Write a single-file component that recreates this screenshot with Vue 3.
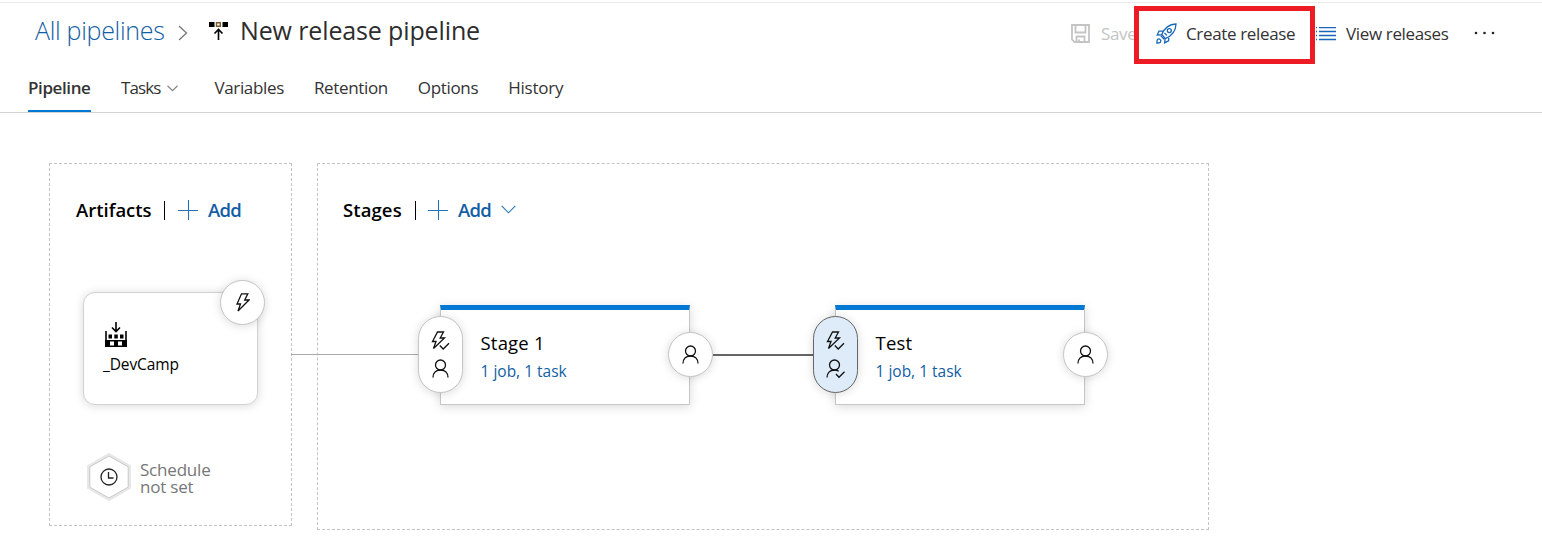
<script setup>
const tabs = [
  { id: 'pipeline', label: 'Pipeline' },
  { id: 'tasks', label: 'Tasks', menu: true },
  { id: 'variables', label: 'Variables' },
  { id: 'retention', label: 'Retention' },
  { id: 'options', label: 'Options' },
  { id: 'history', label: 'History' },
]
const stages = [
  { id: 'first', name: 'Stage 1', summary: '1 job, 1 task', gated: false },
  { id: 'second', name: 'Test', summary: '1 job, 1 task', gated: true },
]
</script>

<template>
  <div class="page">
    <header class="header">
      <div class="title-row">
        <a class="crumb">All pipelines</a>
        <svg class="crumb-sep" width="10" height="16" viewBox="0 0 10 16"><path d="M1 1l7.5 7L1 15" /></svg>
        <svg class="release-icon" width="19" height="20" viewBox="0 0 19 20">
          <path class="solid" d="M0 1h5.500v5H0zM13.500 1H19v5h-5.500z" />
          <path class="tan" d="M7.500 1.700h3.800v3.600H7.500z" />
          <path class="line" d="M9.500 19V9M5.500 12.500l4-4 4 4" />
        </svg>
        <h1 class="title">New release pipeline</h1>
        <div class="actions">
          <span class="action save">
            <svg width="19" height="19" viewBox="0 0 19 19">
              <path d="M1 1h17v17H3.500L1 15.500zM4.500 1v7.500h10V1M5.500 18v-5.500h8V18M8 18v-2.500" />
            </svg>
            <span class="save-text">Save</span>
          </span>
          <span class="action create">
            <svg width="21" height="21" viewBox="0 0 21 21">
              <path d="M5.800 11.500C8 6 12.500 1.300 20 1c-.2 7-4.500 12-10.700 14.700zM7.500 8L3 8.200 1.200 12l4.300-.1M12.800 13.500l-.2 4.300-4 2.100.5-4.300" />
              <circle cx="13.300" cy="7.600" r="2" />
              <path d="M4.800 12.800l3.400 3.400M8.500 10l2.400 2.400M1.500 16.500c1.600-1.500 4.400.8 2.900 2.700-.8.8-2 .8-3.500.8 0-1.300 0-2.700.6-3.500z" />
            </svg>
            <span class="create-text">Create release</span>
          </span>
          <span class="action view">
            <svg width="20" height="14" viewBox="0 0 20 14">
              <path d="M3 .5h17M3 4.500h17M3 8.500h17M3 12.500h17M0 .5h1M0 4.500h1M0 8.500h1M0 12.500h1" />
            </svg>
            <span class="view-text">View releases</span>
          </span>
          <svg class="more" width="22" height="4" viewBox="0 0 22 4">
            <circle cx="2" cy="2" r="1.300" /><circle cx="10.500" cy="2" r="1.300" /><circle cx="19" cy="2" r="1.300" />
          </svg>
        </div>
      </div>
      <nav class="tabs">
        <a v-for="tab in tabs" :key="tab.id" class="tab" :class="[tab.id, { active: tab.id === 'pipeline' }]">
          <span>{{ tab.label }}</span>
          <svg v-if="tab.menu" width="11" height="7" viewBox="0 0 11 7"><path d="M.5.700l5 5 5-5" /></svg>
        </a>
      </nav>
    </header>

    <main class="canvas">
      <section class="panel artifacts">
        <div class="panel-head">
          <h2 class="artifacts-title">Artifacts</h2>
          <i class="divider"></i>
          <svg class="plus" width="20" height="20" viewBox="0 0 20 20"><path d="M0 10.500h20M10.500 0v20" /></svg>
          <span class="add">Add</span>
        </div>
        <div class="artifact-card">
          <svg class="build-icon" width="22" height="25" viewBox="0 0 22 25">
            <path class="line" d="M11 0v9M7 5.500l4 4 4-4M1 9v9M21 9v9" />
            <path class="solid" d="M3.500 12.500H7v4H3.500zM9.300 12.500h3.500v4H9.300zM15 12.500h3.500v4H15zM0 18h22v7H0z" />
            <path class="hole" d="M5 19.500h4v4H5zM13 19.500h4v4h-4z" />
          </svg>
          <span class="artifact-name">_DevCamp</span>
          <span class="round trigger">
            <svg width="14" height="19" viewBox="0 0 14 19"><path d="M5.500.8h6.300L8.700 7H13L2 18l2.500-7H1z" /></svg>
          </span>
        </div>
        <div class="schedule">
          <svg width="46" height="50" viewBox="0 0 46 50">
            <path class="halo" d="M23 2.500l20.500 11.800v21.400L23 47.500 2.500 35.700V14.300z" />
            <path class="hex" d="M23 4l19.200 10.800v20.400L23 46 3.800 35.200V14.800z" />
            <circle class="clock" cx="23" cy="25" r="8" /><path class="clock" d="M22.500 20v6h5" />
          </svg>
          <span class="schedule-text">Schedule<br>not set</span>
        </div>
      </section>

      <section class="panel stages">
        <div class="panel-head">
          <h2 class="stages-title">Stages</h2>
          <i class="divider"></i>
          <svg class="plus" width="20" height="20" viewBox="0 0 20 20"><path d="M0 10.500h20M10.500 0v20" /></svg>
          <span class="add">Add</span>
          <svg class="chev" width="15" height="9" viewBox="0 0 15 9"><path d="M.7.800l6.800 7 6.800-7" /></svg>
        </div>
        <div class="stage-row">
          <article v-for="stage in stages" :key="stage.id" class="stage" :class="{ gated: stage.gated }">
            <i class="link"></i>
            <span class="pill">
              <svg width="19" height="20" viewBox="0 0 19 20">
                <path d="M6.500 1h6L9.200 7H13.500L2.500 17.500l2.500-7H1.500zM8.800 14.500l3.400 3.500 5.800-5.800" />
              </svg>
              <svg width="19" height="20" viewBox="0 0 19 20">
                <template v-if="stage.gated">
                  <circle cx="8.500" cy="6" r="5" />
                  <path d="M1 18.500c0-4.200 2.800-7.500 7.500-7.500 1.600 0 3 .4 4.200 1.300M10 15l3 3.300 5.500-5.600" />
                </template>
                <template v-else>
                  <circle cx="9.500" cy="6" r="5" />
                  <path d="M2 18.500c0-4.500 3-7.500 7.500-7.500s7.500 3 7.500 7.500" />
                </template>
              </svg>
            </span>
            <span class="stage-name">{{ stage.name }}</span>
            <a class="stage-summary">{{ stage.summary }}</a>
            <span class="round approver">
              <svg width="18" height="20" viewBox="0 0 18 20">
                <circle cx="8.500" cy="6" r="5" /><path d="M1 18.500c0-4.500 3-7.500 7.500-7.500s7.500 3 7.500 7.500" />
              </svg>
            </span>
          </article>
        </div>
      </section>
    </main>
  </div>
</template>

<style>
body { background: #fff; }
</style>

<style scoped>
* { box-sizing: border-box; }
.page { width: 1542px; height: 557px; overflow: hidden; font-family: "Open Sans", "Noto Sans", sans-serif; color: #333; white-space: nowrap; background: #fff; }
svg { flex: none; display: block; fill: none; stroke: #111; stroke-width: 1.3; }
h1, h2 { margin: 0; }
.header { height: 113px; padding-top: 2px; border-bottom: 1px solid #d4d4d4; display: flex; flex-direction: column; }
.title-row { position: relative; height: 62px; padding-left: 35px; border-top: 1px solid #eaeaea; display: flex; align-items: flex-start; }
.crumb { width: 143px; margin-top: 9px; font-size: 25px; line-height: 36px; font-weight: 300; letter-spacing: -.3px; color: #125ea5; }
.crumb-sep { margin-top: 22px; stroke: #777; }
.release-icon { margin: 18px 0 0 21px; }
.solid { fill: #000; stroke: none; }
.tan { stroke: #7b5c2c; stroke-width: 1.4; }
.line { stroke: #000; stroke-width: 1.6; }
.title { margin: 9px 0 0 12px; font-size: 25px; line-height: 36px; font-weight: 400; letter-spacing: -.13px; color: #2d2d2d; }
.actions { position: absolute; left: 1071px; top: 3px; height: 58px; display: flex; align-items: center; font-size: 17px; letter-spacing: -.35px; }
.action { height: 58px; padding-bottom: 3px; display: flex; align-items: center; }
.save { width: 63px; color: #c4c4c4; gap: 11px; }
.save svg { stroke: #c4c4c4; stroke-width: 1.8; }
.create { position: relative; width: 181px; padding: 0 0 3px 17px; gap: 9px; border: 5px solid #ed1c24; background: #fff; }
.create svg { stroke: #1868b8; }
.view { gap: 10px; margin-left: 1px; }
.view svg { stroke: #1565ba; stroke-width: 1.4; }
.more { margin: 0 0 4px 25px; fill: #222; stroke: none; }
.tabs { height: 48px; padding-left: 28px; display: flex; font-size: 17px; letter-spacing: -.35px; line-height: 46px; }
.tab { height: 48px; margin-right: 30px; display: flex; align-items: center; gap: 7px; }
.tab svg { stroke: #888; }
.pipeline { width: 63px; }
.tasks { margin-right: 36px; letter-spacing: -.9px; }
.history { letter-spacing: -.2px; }
.active { font-weight: 600; letter-spacing: -.4px; border-bottom: 2px solid #0078d4; padding-top: 2px; }
.canvas { display: flex; align-items: flex-start; gap: 25px; padding: 50px 0 0 49px; }
.panel { border: 1px dashed #c3c3c3; }
.artifacts { width: 243px; height: 363px; }
.stages { width: 892px; height: 367px; }
.panel-head { height: 28px; margin: 32px 0 0 26px; display: flex; align-items: center; }
.stages .panel-head { margin-left: 25px; }
h2 { font-size: 18.500px; line-height: 28px; font-weight: 600; color: #000; }
.artifacts-title { width: 88px; }
.stages-title { width: 72px; letter-spacing: .1px; }
.divider { width: 1px; height: 19px; background: #000; }
.plus { margin: 0 10px 0 13px; stroke: #2373b9; stroke-width: 1.1; }
.stages .plus { margin-left: 12px; }
.add { width: 33px; font-size: 18.500px; line-height: 28px; font-weight: 600; letter-spacing: -.7px; color: #125ea5; }
.chev { margin: 0 0 2px 10px; stroke: #2373b9; stroke-width: 1.1; }
.artifact-card { position: relative; width: 175px; height: 113px; margin: 68px 0 0 33px; padding: 29px 0 0 20px; border: 1px solid #d2d2d2; border-radius: 12px; box-shadow: 0 1px 10px rgba(0, 0, 0, .15); display: flex; flex-direction: column; align-items: flex-start; background: #fff; }
.build-icon { margin-left: 1px; }
.artifact-name { margin: 5px 0 0 -1px; font-size: 15.500px; line-height: 24px; letter-spacing: -.1px; color: #000; }
.hole { fill: #fff; stroke: none; }
.round { position: absolute; width: 45px; height: 45px; border: 1px solid #c5c5c5; border-radius: 50%; background: #fff; box-shadow: 0 1px 10px rgba(0, 0, 0, .15); display: flex; align-items: center; justify-content: center; }
.trigger { right: -8px; top: -13px; }
.schedule { display: flex; align-items: center; gap: 8px; margin: 47px 0 0 36px; font-size: 17px; line-height: 17.500px; letter-spacing: -.2px; color: #777; }
.schedule-text { padding-top: 2px; }
.halo { stroke: #e8e8e8; stroke-width: 3; }
.hex { fill: #fff; stroke: #c8c8c8; stroke-width: 1; }
.clock { stroke: #222; }
.stage-row { display: flex; gap: 145px; margin: 81px 0 0 122px; }
.stage { position: relative; width: 250px; height: 100px; padding: 20px 0 0 39.500px; border: 1px solid #c6c6c6; border-top: 5px solid #0078d4; box-shadow: 0 2px 10px rgba(0, 0, 0, .15); display: flex; flex-direction: column; background: #fff; }
.stage-name { font-size: 18.500px; line-height: 26px; letter-spacing: .2px; color: #000; }
.stage-summary { margin-top: 3px; font-size: 15.500px; line-height: 24px; color: #125ea5; }
.pill { position: absolute; left: -23px; top: 6px; width: 45px; height: 77px; border: 1px solid #c5c5c5; border-radius: 23px; background: #fff; box-shadow: 0 1px 10px rgba(0, 0, 0, .15); display: flex; flex-direction: column; align-items: center; justify-content: center; gap: 8px; }
.gated .pill { background: #deecf9; border-color: #666; }
.approver { right: -24px; top: 22px; }
.link { position: absolute; left: -150px; top: 44px; width: 128px; height: 1px; background: #aaa; }
.gated .link { left: -123px; width: 101px; height: 2px; background: #666; }
</style>
